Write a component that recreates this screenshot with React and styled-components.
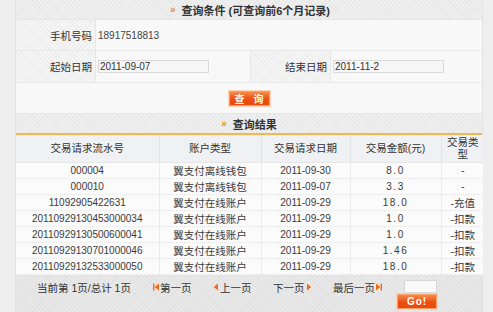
import React from "react";
import styled, { createGlobalStyle } from "styled-components";

const Global = createGlobalStyle`
  html, body { margin: 0; padding: 0; background: #efefef; }
  body { font-family: "Liberation Sans", "Noto Sans CJK SC", sans-serif; font-size: 10px; color: #333; }
  * { box-sizing: border-box; }
`;

const Page = styled.div`
  display: flex;
  width: 493px;
  height: 312px;
  overflow: hidden;
  background: #f2f2f2;
`;

const Gutter = styled.div`
  width: ${(p) => p.$w}px;
  flex: none;
  background: #eeeeee;
`;

const Panel = styled.div`
  width: 468px;
  flex: none;
  display: flex;
  flex-direction: column;
  background: #f8f8f8;
  border-left: 1px solid #e2e2e2;
  border-right: 1px solid #e2e2e2;
`;

const hatch = `
  background-color: #f0f0f0;
  background-image: repeating-linear-gradient(45deg, rgba(0,0,0,0.025) 0 1px, transparent 1px 3px),
    repeating-linear-gradient(-45deg, rgba(0,0,0,0.025) 0 1px, transparent 1px 3px);
`;

const SectionHead = styled.div`
  ${hatch}
  height: ${(p) => p.$h}px;
  display: flex;
  align-items: center;
  justify-content: center;
  gap: 6px;
  font-size: 11px;
  font-weight: bold;
  color: #333;
  border-bottom: ${(p) => (p.$accent ? "2px solid #f5b64c" : "1px solid #e6e6e6")};
  padding-left: ${(p) => p.$shift || 0}px;
`;

const Arrow = styled.span`
  color: #f08a24;
  font-size: 10px;
  font-weight: bold;
`;

const FormRow = styled.div`
  display: grid;
  grid-template-columns: ${(p) => p.$cols};
  height: ${(p) => p.$h}px;
  border-bottom: 1px solid #e8e8e8;
`;

const Label = styled.div`
  display: flex;
  align-items: center;
  justify-content: flex-end;
  padding-right: 3px;
  font-size: 10.5px;
  color: #333;
  border-right: 1px solid #e6e6e6;
  ${hatch}
  background-color: #f6f6f6;
`;

const Value = styled.div`
  display: flex;
  align-items: center;
  padding-left: 2px;
  color: #444;
  border-right: ${(p) => (p.$divider ? "1px solid #e6e6e6" : "none")};
`;

const DateInput = styled.div`
  width: 111px;
  height: 13px;
  border: 1px solid #dadada;
  background: #f6f6f6;
  display: flex;
  align-items: center;
  padding-left: 1px;
  color: #333;
`;

const ButtonRow = styled.div`
  height: 31px;
  display: flex;
  justify-content: center;
  padding-top: 8px;
  border-bottom: 1px solid #e6e6e6;
`;

const OrangeButton = styled.div`
  width: ${(p) => p.$w}px;
  height: 15px;
  flex: none;
  white-space: nowrap;
  background: linear-gradient(#f88b4b, #ea4f12 55%, #e84a0e);
  border: 1px solid #f6a06c;
  box-shadow: 0 0 0 1px #fbd3b8;
  color: #fff;
  font-weight: bold;
  font-size: 10px;
  display: flex;
  align-items: center;
  justify-content: center;
  gap: ${(p) => p.$gap || 0}px;
  letter-spacing: ${(p) => p.$ls || 0}px;
`;

const Table = styled.table`
  width: 468px;
  border-collapse: collapse;
  table-layout: fixed;
  background: #fbfbfb;
`;

const Th = styled.th`
  font-weight: normal;
  font-size: 10.5px;
  color: #333;
  height: 27px;
  background: #eff1f4;
  border-right: 1px solid #e2e4e8;
  border-bottom: 1px solid #e6e6e6;
  line-height: 12px;
  padding: 0 2px;
  &:last-child { border-right: none; }
`;

const Td = styled.td`
  text-align: center;
  height: 16px;
  padding: 0;
  color: #3a3a3a;
  font-size: ${(p) => (p.$cjk ? "10.5px" : "10px")};
  letter-spacing: ${(p) => p.$ls || 0}px;
  border-right: 1px solid #ececec;
  border-bottom: 1px dotted #e4e4e4;
  &:last-child { border-right: none; }
`;

const Footer = styled.div`
  ${hatch}
  background-color: #e9e9e9;
  flex: 1;
  display: flex;
  align-items: flex-start;
  padding: 5px 0 0 21px;
  font-size: 10.5px;
  color: #333;
`;

const PageInfo = styled.span`
  width: 116px;
  flex: none;
`;

const PageLink = styled.span`
  width: ${(p) => p.$w}px;
  flex: none;
  display: flex;
  align-items: center;
  gap: 1px;
`;

const GoBox = styled.div`
  display: flex;
  flex-direction: column;
  align-items: flex-end;
  gap: 1px;
  margin-left: ${(p) => p.$ml}px;
`;

const PageInput = styled.div`
  width: 33px;
  height: 13px;
  border: 1px solid #d8d8d8;
  background: #fafafa;
`;

const Icon = ({ kind }) => {
  const c = "#f26a10";
  return (
    <svg width="6" height="8" viewBox="0 0 6 8">
      {kind === "first" && (
        <>
          <rect x="0" y="0.5" width="1.4" height="7" fill={c} />
          <polygon points="6,0.5 1.6,4 6,7.5" fill={c} />
        </>
      )}
      {kind === "prev" && <polygon points="5,0.5 0.8,4 5,7.5" fill={c} />}
      {kind === "next" && <polygon points="1,0.5 5.2,4 1,7.5" fill={c} />}
      {kind === "last" && (
        <>
          <polygon points="0,0.5 4.4,4 0,7.5" fill={c} />
          <rect x="4.6" y="0.5" width="1.4" height="7" fill={c} />
        </>
      )}
    </svg>
  );
};

const rows = [
  ["000004", "翼支付离线钱包", "2011-09-30", "8.0", "-"],
  ["000010", "翼支付离线钱包", "2011-09-07", "3.3", "-"],
  ["11092905422631", "翼支付在线账户", "2011-09-29", "18.0", "-充值"],
  ["20110929130453000034", "翼支付在线账户", "2011-09-29", "1.0", "-扣款"],
  ["20110929130500600041", "翼支付在线账户", "2011-09-29", "1.0", "-扣款"],
  ["20110929130701000046", "翼支付在线账户", "2011-09-29", "1.46", "-扣款"],
  ["20110929132533000050", "翼支付在线账户", "2011-09-29", "18.0", "-扣款"],
];

export default function App() {
  return (
    <>
      <Global />
      <Page>
        <Gutter $w={15} />
        <Panel>
          <SectionHead $h={20} $shift={2}>
            <Arrow>»</Arrow>
            <span>查询条件 (可查询前6个月记录)</span>
          </SectionHead>
          <FormRow $cols="80px 1fr" $h={31}>
            <Label>手机号码</Label>
            <Value>18917518813</Value>
          </FormRow>
          <FormRow $cols="80px 155px 80px 1fr" $h={32}>
            <Label>起始日期</Label>
            <Value $divider>
              <DateInput>2011-09-07</DateInput>
            </Value>
            <Label>结束日期</Label>
            <Value>
              <DateInput>2011-11-2</DateInput>
            </Value>
          </FormRow>
          <ButtonRow>
            <OrangeButton $w={41} $gap={9}>
              <span>查</span>
              <span>询</span>
            </OrangeButton>
          </ButtonRow>
          <SectionHead $h={21} $accent $shift={-8}>
            <Arrow>»</Arrow>
            <span>查询结果</span>
          </SectionHead>
          <Table>
            <colgroup>
              <col style={{ width: 143 }} />
              <col style={{ width: 102 }} />
              <col style={{ width: 89 }} />
              <col style={{ width: 91 }} />
              <col style={{ width: 43 }} />
            </colgroup>
            <thead>
              <tr>
                <Th>交易请求流水号</Th>
                <Th>账户类型</Th>
                <Th>交易请求日期</Th>
                <Th>交易金额(元)</Th>
                <Th>交易类型</Th>
              </tr>
            </thead>
            <tbody>
              {rows.map((r) => (
                <tr key={r[0]}>
                  <Td>{r[0]}</Td>
                  <Td $cjk>{r[1]}</Td>
                  <Td>{r[2]}</Td>
                  <Td $ls={1.5}>{r[3]}</Td>
                  <Td $cjk>{r[4]}</Td>
                </tr>
              ))}
            </tbody>
          </Table>
          <Footer>
            <PageInfo>当前第 1页/总计 1页</PageInfo>
            <PageLink $w={60}>
              <Icon kind="first" />
              第一页
            </PageLink>
            <PageLink $w={60}>
              <Icon kind="prev" />
              上一页
            </PageLink>
            <PageLink $w={60}>
              下一页
              <Icon kind="next" />
            </PageLink>
            <PageLink $w={60}>
              最后一页
              <Icon kind="last" />
            </PageLink>
            <GoBox $ml={4}>
              <PageInput />
              <OrangeButton $w={40} $ls={1}>Go!</OrangeButton>
            </GoBox>
          </Footer>
        </Panel>
        <Gutter $w={10} />
      </Page>
    </>
  );
}
